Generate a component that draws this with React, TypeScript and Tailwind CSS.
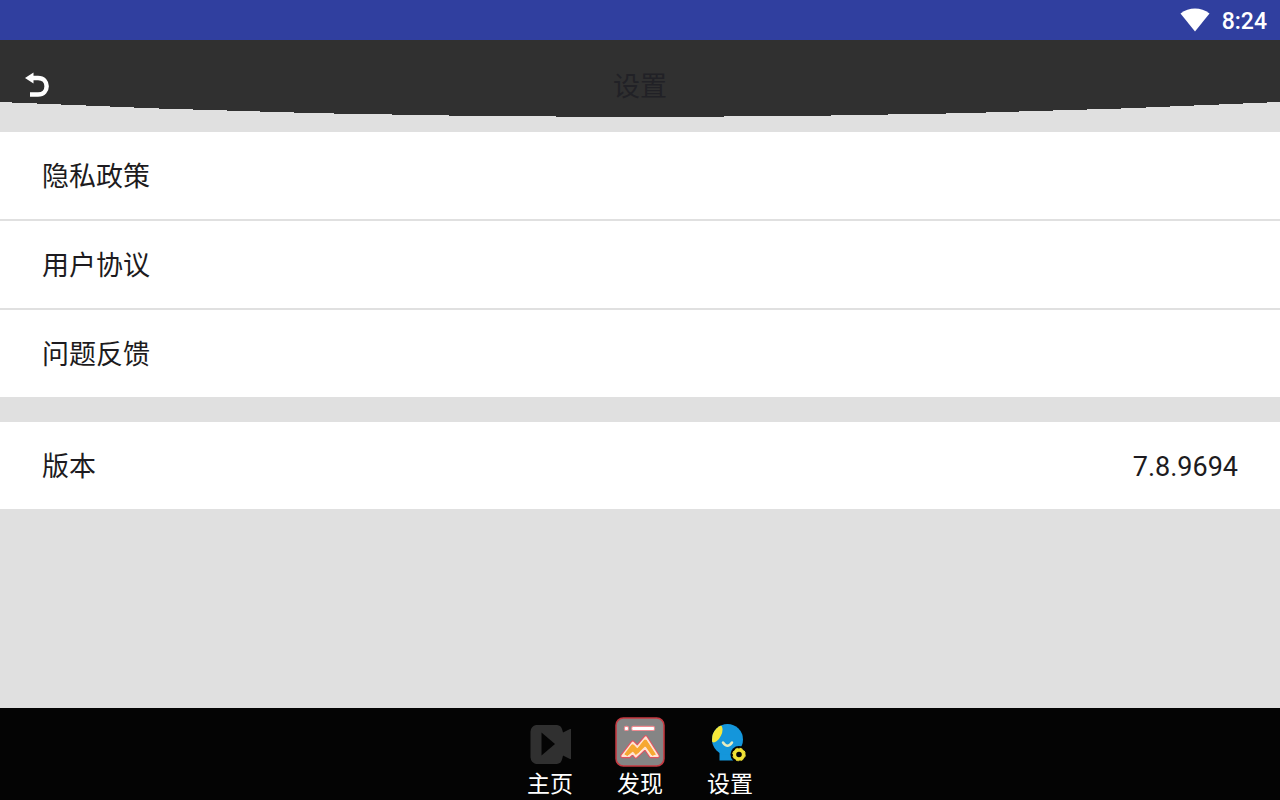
import type { ReactNode } from 'react';

const POLICY_ITEMS = ['隐私政策', '用户协议', '问题反馈'];

function WifiIcon() {
  return (
    <svg width="30" height="28" viewBox="0 0 30 28" aria-hidden="true">
      <path d="M0.5 5.5C9 -1.2 21 -1.2 29.5 5.5L15 23.5Z" fill="#fff" />
    </svg>
  );
}

function BackIcon() {
  return (
    <svg width="26" height="26" viewBox="0 0 26 26" aria-hidden="true">
      <path d="M8 6H14C25.500 6 25.500 22.500 14 22.500H6" fill="none" stroke="#fff" strokeWidth="4.500" />
      <path d="M1 6L9.500 0.500V11.500Z" fill="#fff" />
    </svg>
  );
}

function VideoIcon() {
  return (
    <svg className="shrink-0" width="50" height="50" viewBox="-1 -1 50 50" aria-hidden="true">
      <path
        d="M10 7H31Q35 7.500 36 11L37 14.500L44 11H45V41H44L37 37.500L36 41.500Q35 45.500 31 46H10Q5 44.500 4.500 39.500V13.500Q5 8 10 7Z"
        fill="#303030"
      />
      <path d="M15.500 14.500L29 26L15.500 37.500Z" fill="#040404" />
    </svg>
  );
}

function DiscoverIcon() {
  return (
    <svg className="shrink-0" width="50" height="50" viewBox="0 0 48 48" aria-hidden="true">
      <rect x="1" y="1" width="46" height="46" rx="7" fill="#858585" stroke="#c63a42" strokeWidth="1.500" />
      <g stroke="#f08a90" strokeWidth="1">
        <rect x="9" y="9" width="4" height="4" rx="1.500" fill="#fff" />
        <rect x="16" y="9" width="22" height="4" rx="1.500" fill="#fff" />
      </g>
      <g strokeLinejoin="round">
        <path d="M7 37.500L17 24.500L21.500 29L29.500 19.500L41 37.500H34.500L29 29.500L20 38L17 34.500L13.500 37.500Z" fill="#e55360" stroke="#e55360" strokeWidth="4" />
        <path d="M7 37.500L17 24.500L21.500 29L29.500 19.500L41 37.500H34.500L29 29.500L20 38L17 34.500L13.500 37.500Z" fill="#f6a832" stroke="#ffe3d2" strokeWidth="2" />
        <path d="M10.500 36.500L17 28L21.500 33L29 23.500L37.500 36.500" fill="none" stroke="#f6a832" strokeWidth="3.500" />
      </g>
    </svg>
  );
}

function SettingsIcon() {
  return (
    <svg className="shrink-0" width="50" height="50" viewBox="-1 -1 50 50" aria-hidden="true">
      <clipPath id="head">
        <circle cx="21.500" cy="21.500" r="15.500" />
      </clipPath>
      <path d="M13.500 32H31V42.500H13.500Z" fill="#1496db" />
      <circle cx="21.500" cy="21.500" r="15.500" fill="#1496db" />
      <g clipPath="url(#head)">
        <ellipse cx="10.500" cy="15.500" rx="5" ry="9.500" transform="rotate(25 10.500 15.500)" fill="#f5e83a" />
      </g>
      <path d="M17 24.500Q21.500 31 26 24.500" fill="none" stroke="#e5ecc0" strokeWidth="2.500" strokeLinecap="round" />
      <circle cx="33" cy="36.500" r="8.500" fill="#040404" />
      <circle cx="33" cy="36.500" r="4.500" fill="none" stroke="#f0e236" strokeWidth="3.400" />
      <circle cx="33" cy="36.500" r="6.300" fill="none" stroke="#f0e236" strokeWidth="1" strokeDasharray="2.950 2" />
    </svg>
  );
}

const TABS: { label: string; icon: ReactNode }[] = [
  { label: '主页', icon: <VideoIcon /> },
  { label: '发现', icon: <DiscoverIcon /> },
  { label: '设置', icon: <SettingsIcon /> },
];

export default function App() {
  return (
    <div className="flex min-h-screen flex-col bg-[#e0e0e0] font-['Roboto','Noto_Sans_CJK_SC',sans-serif] text-[27px] leading-8 text-[#1d1b20]">
      {/* Status bar */}
      <div className="flex h-10 items-center justify-end gap-3 bg-[#303f9f] pr-[13px] pt-[3px] text-white">
        <WifiIcon />
        <span className="text-[23px] font-medium">8:24</span>
      </div>

      {/* Header with curved bottom edge */}
      <header>
        <div className="grid h-[62px] grid-cols-3 items-end bg-[#303030] px-6">
          <button aria-label="返回" className="mb-1 justify-self-start">
            <BackIcon />
          </button>
          <h1 className="text-center leading-[30px] text-[#212126]">设置</h1>
        </div>
        <svg
          className="block h-[30px] w-full"
          viewBox="0 0 1280 30"
          preserveAspectRatio="none"
          shapeRendering="crispEdges"
          aria-hidden="true"
        >
          <path d="M0 0L160 6.560L320 11.250L480 14.060L640 15L800 14.060L960 11.250L1120 6.560L1280 0Z" fill="#303030" />
        </svg>
      </header>

      <main className="flex-1">
        <ul className="flex flex-col gap-0.5">
          {POLICY_ITEMS.map((item) => (
            <li key={item}>
              <button className="flex h-[87px] w-full items-center bg-white px-[42px] pt-0.5 text-left">{item}</button>
            </li>
          ))}
        </ul>

        <div className="mt-[25px] flex h-[87px] items-center justify-between bg-white px-[42px] pt-0.5">
          <span>版本</span>
          <span>7.8.9694</span>
        </div>
      </main>

      {/* Bottom tabs */}
      <nav className="flex h-[92px] justify-center bg-[#040404] text-[23px] leading-7 text-white">
        {TABS.map((tab) => (
          <button key={tab.label} className="flex w-[90px] flex-col items-center gap-1 pt-[9px]">
            {tab.icon}
            <span>{tab.label}</span>
          </button>
        ))}
      </nav>
    </div>
  );
}
